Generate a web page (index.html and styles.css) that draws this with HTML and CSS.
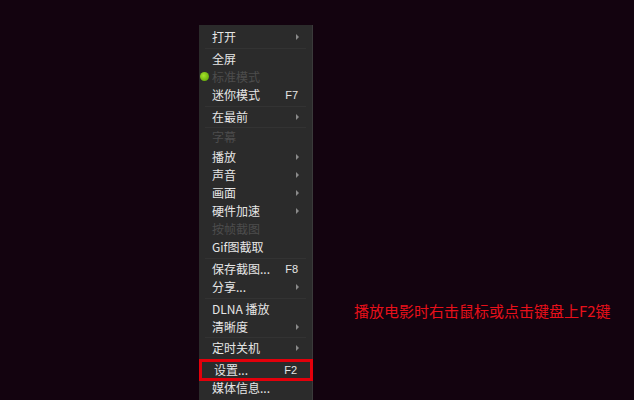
FILE: index.html
```html
<!DOCTYPE html>
<html>
<head>
<meta charset="utf-8">
<link rel="stylesheet" href="styles.css">
</head>
<body>
<div class="stage">
  <div class="menu">
    <div class="item"><span class="label">打开</span><span class="arrow"></span></div>
    <div class="sep"></div>
    <div class="item"><span class="label">全屏</span></div>
    <div class="item disabled"><span class="dot"></span><span class="label">标准模式</span></div>
    <div class="item"><span class="label">迷你模式</span><span class="key">F7</span></div>
    <div class="sep"></div>
    <div class="item"><span class="label">在最前</span><span class="arrow"></span></div>
    <div class="sep thin"></div>
    <div class="item disabled"><span class="label">字幕</span></div>
    <div class="gap"></div>
    <div class="item"><span class="label">播放</span><span class="arrow"></span></div>
    <div class="item"><span class="label">声音</span><span class="arrow"></span></div>
    <div class="item"><span class="label">画面</span><span class="arrow"></span></div>
    <div class="item"><span class="label">硬件加速</span><span class="arrow"></span></div>
    <div class="item disabled"><span class="label">按帧截图</span></div>
    <div class="item"><span class="label">Gif图截取</span></div>
    <div class="sep"></div>
    <div class="item"><span class="label">保存截图...</span><span class="key">F8</span></div>
    <div class="item"><span class="label">分享...</span><span class="arrow"></span></div>
    <div class="sep"></div>
    <div class="item"><span class="label">DLNA 播放</span></div>
    <div class="item"><span class="label">清晰度</span><span class="arrow"></span></div>
    <div class="sep mid"></div>
    <div class="item"><span class="label">定时关机</span><span class="arrow"></span></div>
    <div class="sep"></div>
    <div class="item marked"><span class="label">设置...</span><span class="key">F2</span></div>
    <div class="item"><span class="label">媒体信息...</span></div>
  </div>
  <div class="note">播放电影时右击鼠标或点击键盘上F2键</div>
</div>
</body>
</html>
```
FILE: styles.css
```css
html, body {
  margin: 0;
  padding: 0;
  background: #13030f;
  width: 634px;
  height: 400px;
  overflow: hidden;
}
.stage {
  display: flex;
  align-items: flex-start;
  height: 400px;
}
.menu {
  margin-left: 199px;
  margin-top: 25px;
  width: 114px;
  height: 380px;
  background: #2b2b2b;
  border-right: 1px solid #3a3a3a;
  padding-top: 3px;
  box-sizing: border-box;
  font-family: "Noto Sans CJK SC", "Liberation Sans", sans-serif;
  font-size: 12px;
  color: #e6e6e6;
}
.item {
  position: relative;
  display: flex;
  align-items: center;
  height: 18px;
  padding-left: 13px;
  padding-right: 11px;
}
.label {
  flex: 1;
  white-space: nowrap;
  line-height: 18px;
}
.disabled {
  color: #4d4d4d;
}
.key {
  font-family: "Liberation Sans", sans-serif;
  font-size: 11px;
  margin-right: 3px;
}
.arrow {
  width: 0;
  height: 0;
  border-left: 3px solid #8a8a8a;
  border-top: 3px solid transparent;
  border-bottom: 3px solid transparent;
  margin-right: 2px;
}
.dot {
  position: absolute;
  left: 1px;
  top: 4px;
  width: 9px;
  height: 9px;
  border-radius: 50%;
  background: radial-gradient(circle at 40% 40%, #a6e22a, #6bb00e 70%);
}
.sep {
  height: 4px;
  display: flex;
  align-items: center;
  padding: 0 6px;
}
.sep::before {
  content: "";
  flex: 1;
  height: 1px;
  background: #333333;
}
.sep.thin { height: 2px; }
.sep.mid { height: 3px; }
.gap { height: 2px; }
.marked {
  outline: 3px solid #e3000b;
  outline-offset: -1px;
  margin: 0 1px 0 2px;
}
.note {
  margin-left: 41px;
  margin-top: 301px;
  font-family: "Noto Sans CJK SC", sans-serif;
  font-size: 15px;
  color: #e8101a;
  white-space: nowrap;
  line-height: 20px;
}
```
